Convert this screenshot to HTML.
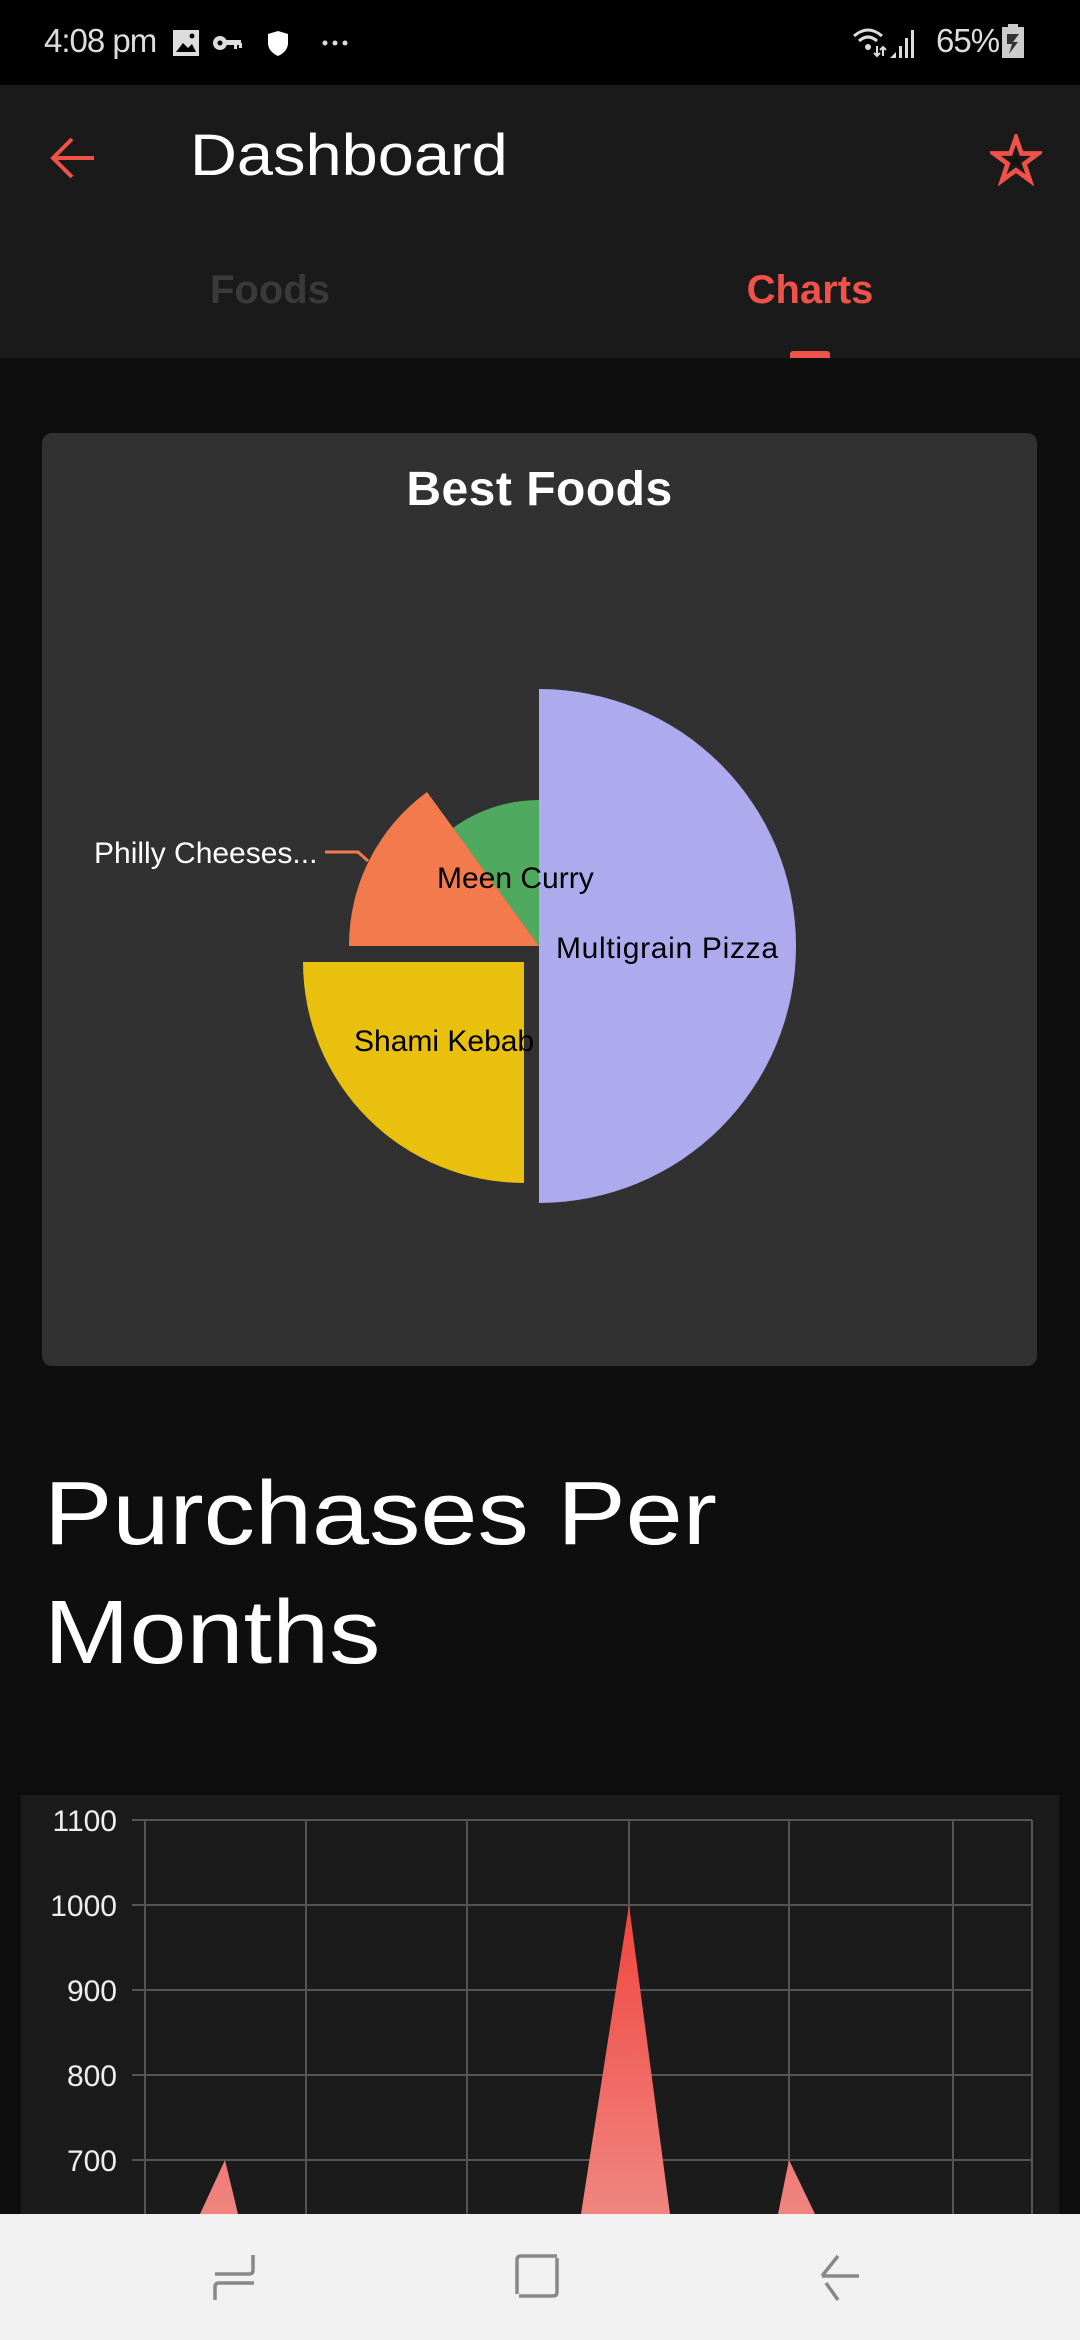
<!DOCTYPE html>
<html><head><meta charset="utf-8"><style>
*{margin:0;padding:0;box-sizing:border-box}
body{width:1080px;height:2340px;background:#0e0e0e;font-family:"Liberation Sans",sans-serif;position:relative;overflow:hidden}
.abs{position:absolute}
</style></head><body>
<div class="abs" style="left:0;top:0;width:1080px;height:85px;background:#000"></div>
<div class="abs" style="left:44px;top:22px;color:#ddd;font-size:33px;letter-spacing:-1px">4:08 pm</div>
<svg class="abs" style="left:170px;top:26px" width="190" height="34" viewBox="0 0 190 34">
<rect x="3" y="4" width="26" height="26" fill="#ddd"/><path d="M6 26 L13 17 L18 22 L22 18 L26 26Z" fill="#000"/><circle cx="22" cy="10" r="2.5" fill="#000"/>
<circle cx="50" cy="17" r="7" fill="#ddd"/><circle cx="50" cy="17" r="2.5" fill="#000"/><rect x="55" y="14" width="16" height="5" fill="#ddd"/><rect x="64" y="17" width="3" height="6" fill="#ddd"/><rect x="69" y="17" width="3" height="5" fill="#ddd"/>
<path d="M108 5 L118 8 L118 18 Q117 26 108 30 Q99 26 98 18 L98 8Z" fill="#fff"/>
<circle cx="155" cy="17" r="2.5" fill="#ddd"/><circle cx="165" cy="17" r="2.5" fill="#ddd"/><circle cx="175" cy="17" r="2.5" fill="#ddd"/>
</svg>
<svg class="abs" style="left:850px;top:22px" width="80" height="40" viewBox="0 0 80 40">
<path d="M4 14 Q18 2 32 14" stroke="#ddd" stroke-width="3" fill="none"/><path d="M9 19 Q18 11 27 19" stroke="#ddd" stroke-width="3" fill="none"/><circle cx="18" cy="25" r="3" fill="#ddd"/>
<path d="M27 24v10M24 31l3 3 3-3M33 34v-9M30 28l3-3 3 3" stroke="#ddd" stroke-width="2" fill="none"/>
<path d="M40 36 L46 30 L46 36Z" fill="#ddd"/><rect x="49" y="24" width="3" height="12" fill="#ddd"/><rect x="55" y="16" width="3" height="20" fill="#ddd"/><rect x="61" y="8" width="3" height="28" fill="#ddd"/>
</svg>
<div class="abs" style="left:936px;top:22px;color:#ddd;font-size:33px;letter-spacing:-1px">65%</div>
<svg class="abs" style="left:1001px;top:24px" width="24" height="36" viewBox="0 0 24 36"><rect x="7" y="0" width="10" height="4" fill="#ccc"/><rect x="1" y="3" width="22" height="31" fill="#ccc"/><path d="M6 10h12l-6 8h5l-9 12 3-10h-5z" fill="#333"/></svg>

<div class="abs" style="left:0;top:85px;width:1080px;height:273px;background:#1a1a1a"></div>
<svg class="abs" style="left:48px;top:135px" width="50" height="46" viewBox="0 0 50 46"><path d="M46 23H6M24 4 L5 23 L24 42" stroke="#f0524a" stroke-width="4" fill="none"/></svg>
<div class="abs" style="left:190px;top:122px;color:#fff;font-size:58px;transform:scaleX(1.12);transform-origin:0 0">Dashboard</div>
<svg class="abs" style="left:990px;top:134px" width="52" height="52" viewBox="0 0 56 56"><path d="M28 4 L34 21 L52 21 L37 32 L43 50 L28 39 L13 50 L19 32 L4 21 L22 21Z" stroke="#f0524a" stroke-width="5" fill="none"/><path d="M28 22 L30 27 L35 27 L31 30 L33 35 L28 32 L23 35 L25 30 L21 27 L26 27Z" fill="#111"/></svg>
<div class="abs" style="left:160px;top:268px;width:220px;text-align:center;color:#3a3a3a;font-size:40px;font-weight:bold">Foods</div>
<div class="abs" style="left:700px;top:268px;width:220px;text-align:center;color:#f0524a;font-size:40px;font-weight:bold">Charts</div>
<div class="abs" style="left:790px;top:351px;width:40px;height:7px;background:#f0524a;border-radius:3px 3px 0 0"></div>

<div class="abs" style="left:42px;top:433px;width:995px;height:933px;background:#313131;border-radius:10px"></div>
<div class="abs" style="left:42px;top:462px;width:995px;text-align:center;color:#fff;font-size:48px;font-weight:bold;letter-spacing:0.5px">Best Foods</div>
<svg class="abs" style="left:0;top:0" width="1080" height="1400" viewBox="0 0 1080 1400">
<path d="M539,946 L539,689 A257 257 0 0 1 539,1203 Z" fill="#aeaaee"/>
<path d="M539,946 L539,800 A146 146 0 0 0 453,828 Z" fill="#4fa95e"/>
<path d="M539,946 L427,792 A190 190 0 0 0 349,946 Z" fill="#f27a4c"/>
<path d="M524,962 L524,1183 A221 221 0 0 1 303,962 Z" fill="#e9c00e"/>
<path d="M325,852 L358,852 L368,861" stroke="#f27a4c" stroke-width="3" fill="none"/>
<g font-family="Liberation Sans, sans-serif" font-size="30">
<text x="94" y="863" fill="#fff">Philly Cheeses...</text>
<text x="437" y="888" fill="#000">Meen Curry</text>
<text x="556" y="958" fill="#000" textLength="222">Multigrain Pizza</text>
<text x="354" y="1051" fill="#000">Shami Kebab</text>
</g>
</svg>

<div class="abs" style="left:44px;top:1455px;color:#fff;font-size:90px;line-height:119px;transform:scaleX(1.14);transform-origin:0 0;white-space:nowrap">Purchases Per<br>Months</div>

<div class="abs" style="left:21px;top:1795px;width:1038px;height:420px;background:#1b1b1b"></div>
<svg class="abs" style="left:0;top:1780px" width="1080" height="440" viewBox="0 1780 1080 440">
<defs><linearGradient id="g" x1="0" y1="1905" x2="0" y2="2214" gradientUnits="userSpaceOnUse"><stop offset="0" stop-color="#f0463e"/><stop offset="1" stop-color="#f08580"/></linearGradient></defs>
<g stroke="#555" stroke-width="2">
<line x1="132" y1="1820" x2="1032" y2="1820"/><line x1="132" y1="1905" x2="1032" y2="1905"/><line x1="132" y1="1990" x2="1032" y2="1990"/><line x1="132" y1="2075" x2="1032" y2="2075"/><line x1="132" y1="2160" x2="1032" y2="2160"/>
<line x1="145" y1="1820" x2="145" y2="2220"/><line x1="306" y1="1820" x2="306" y2="2220"/><line x1="467" y1="1820" x2="467" y2="2220"/><line x1="629" y1="1820" x2="629" y2="2220"/><line x1="789" y1="1820" x2="789" y2="2220"/><line x1="953" y1="1820" x2="953" y2="2220"/><line x1="1032" y1="1820" x2="1032" y2="2220"/>
</g>
<path d="M200,2214 L225,2160 L238,2214Z M581,2214 L629,1905 L670,2214Z M778,2214 L789,2160 L815,2214Z" fill="url(#g)"/>
<g font-family="Liberation Sans, sans-serif" font-size="30" fill="#eee" text-anchor="end">
<text x="117" y="1831">1100</text><text x="117" y="1916">1000</text><text x="117" y="2001">900</text><text x="117" y="2086">800</text><text x="117" y="2171">700</text>
</g>
</svg>

<div class="abs" style="left:0;top:2214px;width:1080px;height:126px;background:#f1f1f1"></div>
<svg class="abs" style="left:0;top:2214px" width="1080" height="126" viewBox="0 2214 1080 126">
<g stroke="#888" stroke-width="3.5" fill="none">
<path d="M253 2255 V2270 Q253 2274 249 2274 H215 M254 2283 H219 Q215 2283 215 2287 V2300"/>
<path d="M557 2256 H521 Q517 2256 517 2260 V2294 M519 2296 H553 Q557 2296 557 2292 V2258"/>
<path d="M859 2276 H822 M838 2256 L822 2276 M826 2283 L838 2300"/>
</g></svg>
</body></html>
